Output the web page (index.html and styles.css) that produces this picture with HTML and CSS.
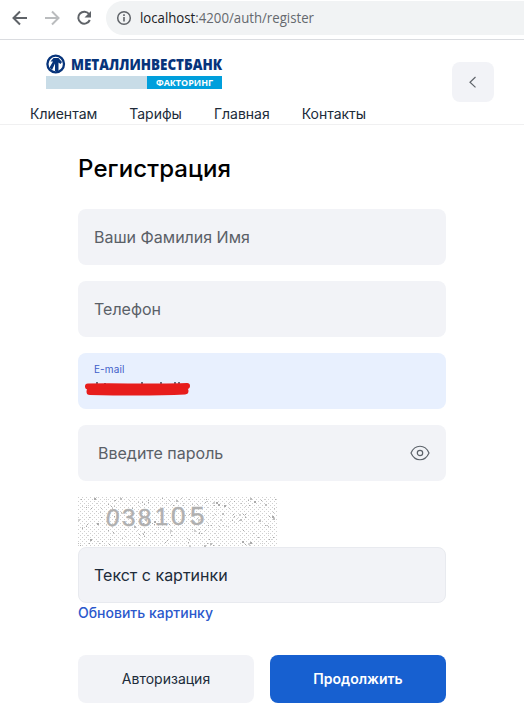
FILE: index.html
```html
<!DOCTYPE html>
<html lang="ru">
<head>
<meta charset="utf-8">
<title>Регистрация</title>
<link rel="stylesheet" href="styles.css">
</head>
<body>
<div class="toolbar">
  <svg class="nav-icons" width="106" height="39" viewBox="0 0 106 39" fill="none" stroke-width="2">
    <path d="M27 18H14M20 11.5L13.5 18L20 24.5" stroke="#5f6368"/>
    <path d="M45 18H58M52 11.5L58.500 18L52 24.500" stroke="#babcbe"/>
    <path d="M89.200 14.200A6 6 0 1 0 89.800 20" stroke="#5f6368"/>
    <path d="M91 11V17.500H84.500Z" fill="#5f6368"/>
  </svg>
  <div class="address">
    <svg width="16" height="16" viewBox="0 0 16 16" fill="none" stroke="#5f6368">
      <circle cx="8" cy="8" r="6.300" stroke-width="1.500"/><path d="M8 7V11.500M8 4.300V6" stroke-width="1.600"/>
    </svg>
    <svg class="url" width="180" height="24"><text x="0" y="17" textLength="174" lengthAdjust="spacingAndGlyphs"><tspan class="host">localhost</tspan>:4200/auth/register</text></svg>
  </div>
</div>
<header class="header">
  <svg class="logo" width="186" height="36" viewBox="0 0 186 36">
    <circle cx="9.700" cy="10" r="8.300" fill="#fff" stroke="#07347b" stroke-width="2.300"/>
    <path d="M3.500 13.500L7 7.500L4.500 7.500L7.500 4H12.500L16 8L14.500 10L12.500 8.500V17H9V9.500L6 16Z" fill="#07347b"/>
    <text class="logo-name" x="25" y="16" textLength="151" lengthAdjust="spacingAndGlyphs">МЕТАЛЛИНВЕСТБАНК</text>
    <rect x="0" y="22" width="101" height="13" fill="#c8dce7"/>
    <rect x="101" y="22" width="75" height="13" fill="#009fdc"/>
    <text class="logo-sub" x="110" y="32" textLength="57" lengthAdjust="spacingAndGlyphs">ФАКТОРИНГ</text>
  </svg>
  <button class="back" aria-label="Назад"><svg width="12" height="14" viewBox="0 0 12 14" fill="none" stroke="#60656b" stroke-width="1.200"><path d="M8.500 2L3 7.200L8.500 12.400"/></svg></button>
  <nav class="menu"><a>Клиентам</a><a>Тарифы</a><a>Главная</a><a>Контакты</a></nav>
</header>
<main class="form">
  <h1>Регистрация</h1>
  <div class="field">Ваши Фамилия Имя</div>
  <div class="field">Телефон</div>
  <div class="field email">
    <span>E-mail</span>
    <svg class="mask" width="108" height="18" viewBox="0 0 108 18">
      <path d="M13 1V4M21 2V4M58 1V4M77 1V4M91 1V4M95 1V4" stroke="#202b39" stroke-width="1.300"/>
      <path d="M4 5.500C25 5 80 6 103 5" stroke="#e71d1c" stroke-width="6" stroke-linecap="round"/>
      <path d="M6 10.500C30 11 80 11 101 10" stroke="#e71d1c" stroke-width="7" stroke-linecap="round" fill="none"/>
    </svg>
  </div>
  <div class="field password"><span>Введите пароль</span>
    <svg width="20" height="16" viewBox="0 0 20 16" fill="none" stroke="#5c6269" stroke-width="1.200"><path d="M1 8C5-1 15-1 19 8C15 17 5 17 1 8Z"/><circle cx="10" cy="8" r="2.700"/></svg>
  </div>
  <svg class="captcha" width="200" height="50" viewBox="0 0 200 50">
    <defs><pattern id="dots" width="4" height="4" patternUnits="userSpaceOnUse"><path d="M0 0h1v1H0zM2 2h1v1H2z" fill="#d0d0d0"/></pattern></defs>
    <rect width="200" height="50" fill="url(#dots)"/>
    <g id="specks"></g>
    <g class="digits"><text x="28" y="29" transform="rotate(8 35 22)">0</text><text x="44" y="29">3</text><text x="60" y="29">8</text><text x="77" y="28">1</text><text x="93" y="28" class="big">0</text><text x="112" y="28" class="big">5</text></g>
  </svg>
  <div class="field code">Текст с картинки</div>
  <a class="refresh">Обновить картинку</a>
  <div class="actions"><button>Авторизация</button><button class="primary">Продолжить</button></div>
</main>
<script src="captcha.js"></script>
</body>
</html>
```
FILE: styles.css
```css
* { box-sizing: border-box; }
body { margin: 0; height: 708px; overflow: hidden; background: #fff; font-family: Inter, sans-serif; color: #202b39; }
button { border: 0; font: inherit; color: inherit; padding: 0; }
.toolbar { height: 40px; display: flex; border-bottom: 1px solid #dadce0; }
.nav-icons { flex: none; }
.address { flex: 1; height: 34px; margin-top: 1px; border-radius: 17px 0 0 17px; background: #f1f3f4; display: flex; align-items: center; padding-left: 10px; gap: 8px; }
.url { font: 14px "Open Sans", sans-serif; fill: #65696e; }
.host { fill: #202124; }
.header { height: 85px; border-bottom: 1px solid #f0f0f1; display: grid; grid-template: 62px 22px / 1fr 42px; padding: 0 30px; }
.logo { margin: 14px 0 0 16px; }
.logo-name { font: 800 16px "Open Sans", sans-serif; fill: #07347b; }
.logo-sub { font: 700 9.500px "Open Sans", sans-serif; fill: #fff; }
.back { width: 42px; height: 40px; margin-top: 22px; border-radius: 8px; background: #f2f3f7; display: flex; align-items: center; justify-content: center; }
.menu { display: flex; gap: 32px; font-size: 14px; line-height: 17px; padding-top: 3px; white-space: nowrap; letter-spacing: -.01px; }
.form { width: 368px; margin: 0 auto; }
h1 { margin: 0; padding-top: 29px; height: 84px; font-size: 24px; line-height: 30px; font-weight: 500; letter-spacing: .13px; color: #000; }
.field { height: 56px; margin-bottom: 16px; padding: 0 16px; border-radius: 8px; background: #f2f3f7; display: flex; align-items: center; font-size: 16px; color: #5a6067; }
.email { background: #e8f0fe; position: relative; align-items: flex-start; padding-top: 10px; font-size: 10px; line-height: 13px; letter-spacing: .1px; color: #3f5fc9; }
.mask { position: absolute; left: 6px; top: 28px; }
.password { padding-left: 20px; justify-content: space-between; }
.captcha { display: block; }
.digits { font: 24px "Liberation Sans", sans-serif; fill: #b0b0b0; stroke: #b0b0b0; stroke-width: .5px; }
.big { font-size: 26px; }
.code { margin: 0; border: 1px solid #e8eaef; padding: 0 15px; color: #202b39; }
.refresh { display: block; height: 52px; line-height: 20px; font-size: 14px; font-weight: 500; color: #2b58cc; }
.actions { display: grid; grid-template-columns: 1fr 1fr; gap: 16px; }
.actions button { height: 48px; padding-bottom: 2px; border-radius: 8px; background: #f2f3f7; font-size: 14px; }
.actions .primary { background: #1760d0; color: #fff; font-weight: 600; }
```
FILE: captcha.js
```js
let seed = 73;
const rnd = () => (seed = (seed * 16807) % 2147483647) / 2147483647;
const group = document.getElementById("specks");
for (let i = 0; i < 230; i++) {
  const r = document.createElementNS("http://www.w3.org/2000/svg", "rect");
  const size = rnd() > 0.85 ? 2 : 1;
  r.setAttribute("x", Math.floor(rnd() * 199));
  r.setAttribute("y", Math.floor(rnd() * 49));
  r.setAttribute("width", size);
  r.setAttribute("height", size);
  r.setAttribute("fill", ["#aaa", "#bebebe", "#d0d0d0"][Math.floor(rnd() * 3)]);
  group.appendChild(r);
}
```
